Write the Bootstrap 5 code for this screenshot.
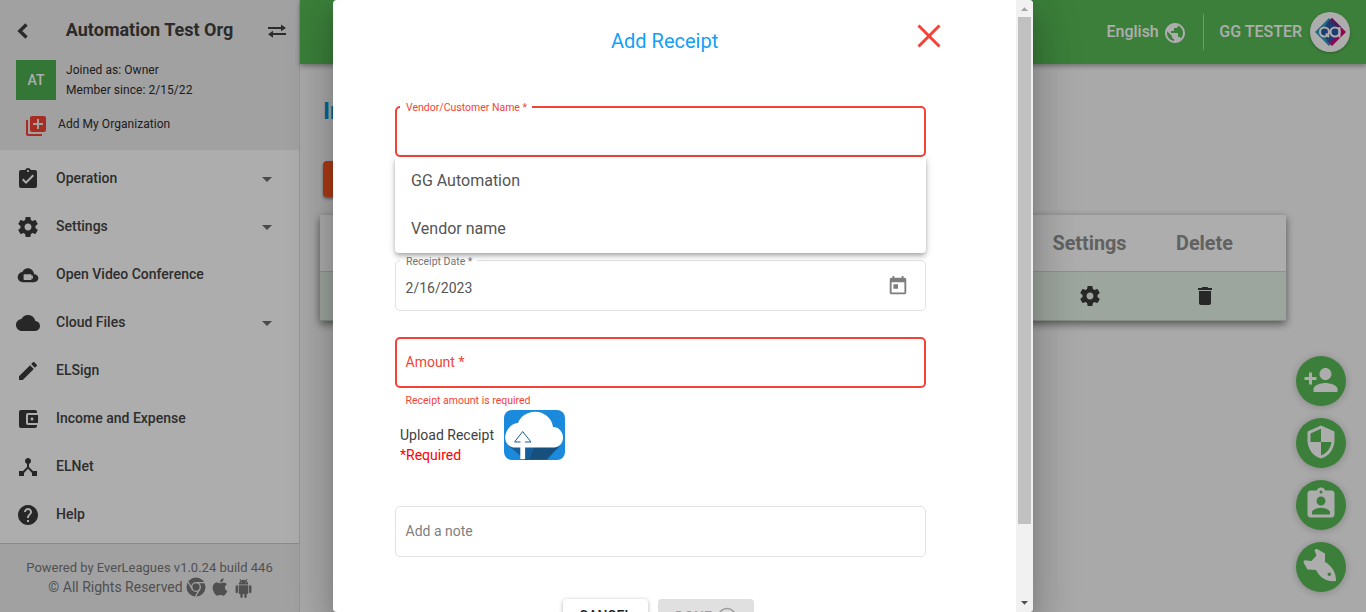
<!DOCTYPE html>
<html lang="en">
<head>
<meta charset="utf-8">
<meta name="viewport" content="width=device-width, initial-scale=1">
<title>Add Receipt</title>
<link href="https://cdn.jsdelivr.net/npm/bootstrap@5.3.0/dist/css/bootstrap.min.css" rel="stylesheet">
<style>
html,body{height:100%}
body{font-family:Roboto,"Noto Sans",sans-serif;font-size:14px;line-height:20px;color:#404040;background:#fafafa;overflow:hidden}
svg{display:block;fill:currentColor;flex:none}
.app{height:612px}
/* sidebar */
.side{width:300px;background:#fff;border-right:1px solid #dcdcdc;font-weight:500}
.side-top{height:150px;background:#eee;color:#404040}
.org-name{font-size:18px;font-weight:700}
.org-meta{font-size:12px;line-height:20px;font-weight:400;letter-spacing:.05px;color:#2c2c2c}
.avatar-sq{width:40px;height:40px;background:#4caf50;color:#fff;font-size:14px}
.menu{padding-top:4px}
.menu-row{height:48px;padding:0 27px 0 16px;gap:16px;color:#444}
.menu-row svg{color:#3a3a3a;margin-top:2px}
.caret{width:0;height:0;margin-top:2px;border:5px solid transparent;border-top-color:#6d6d6d;border-bottom:0}
.side-foot{height:69px;background:#eee;border-top:1px solid #ccc;color:#777;font-weight:400;padding-top:14px}
.side-foot .ver{font-size:13px}
/* main area */
.topbar{height:64px;background:#58bb56;color:#fff;box-shadow:0 2px 5px rgba(0,0,0,.35);font-size:16px;font-weight:500;padding-right:16px;z-index:1}
.divline{width:1px;height:36px;background:#b5dcb4}
.avatar-rd{width:40px;height:40px;background:#fff;box-shadow:0 1px 3px rgba(0,0,0,.25)}
.page-title{font-size:24px;line-height:30px;color:#0498e0;font-weight:700;margin:32px 0 35px 23px}
.btn-add{width:120px;height:36px;margin-left:23px;background:#ff5722;border-radius:4px;box-shadow:0 2px 3px rgba(0,0,0,.4)}
.grid-card{width:966px;margin:18px 0 0 20px;background:#fff;box-shadow:0 3px 8px rgba(0,0,0,.5)}
.grid-head{height:57px;padding-top:2px;border-bottom:1px solid #d5d5d5;font-size:19.8px;font-weight:700;color:#8f8f8f}
.grid-line{height:49px;background:#e8f5e9;border-bottom:1px solid #c4cfc5;color:#3a3a3a}
.c-set{width:115px}.c-del{width:115px}
.fabs{right:20px;top:356px;gap:12px}
.fab{width:50px;height:50px;background:#58bb56;color:#fff;box-shadow:0 1px 8px rgba(0,0,0,.22)}
/* dialog */
.shade{inset:0;background:rgba(0,0,0,.32);z-index:5}
.dlg{width:700px;height:612px;background:#fff;border-radius:4px;overflow:hidden;box-shadow:0 11px 15px -7px rgba(0,0,0,.2),0 24px 38px 3px rgba(0,0,0,.14),0 9px 46px 8px rgba(0,0,0,.12)}
.dlg-body{padding:0 90px 0 62px;height:612px;overflow:hidden}
.dlg-head{height:106px;padding:25px 0 0 216px}
.dlg-title{width:107px;font-size:20px;line-height:32px;color:#12a0f8}
.close-x{margin:-1px 0 0 199px;color:#f44336}
.fld{height:51px;border:1px solid #e2e2e2;border-radius:5px;padding:0 10px 0 9px;color:#555}
.fld.bad{border:2px solid #f44336;color:#f44336;padding:0 9px 2px 8.500px}
.notch{left:4px;top:-9px;padding:1px 5px 0 6px;height:18px;font-size:10.5px;line-height:18px;background:#fff;color:#757575;white-space:nowrap}
.bad .notch{left:3px;top:-10px;color:#f44336}
.opts{left:-2px;right:-2px;top:49px;height:96px;background:#fff;border-radius:0 0 4px 4px;box-shadow:0 2px 4px -1px rgba(0,0,0,.2),0 4px 5px rgba(0,0,0,.14),0 1px 10px rgba(0,0,0,.12);z-index:3;color:#555}
.opt{height:48px;line-height:48px;padding-left:16px;font-size:16px}
.err{font-size:10.5px;line-height:14px;color:#f44336;padding:6px 0 0 10.5px;height:22px}
.upl{height:55px;padding-left:5px;gap:10px}
.upl-text{width:94px;padding-top:15px}
.act{height:36px;border-radius:4px;font-weight:500;line-height:34px;font-size:14px}
.act-c{width:85px;background:#fff;color:#222;box-shadow:0 1px 4px rgba(0,0,0,.3)}
.act-d{width:96px;background:#e0e0e0;color:#9d9d9d}
.sbar{width:17px;background:#f1f1f1}
.sthumb{width:13px;height:507px;background:#c1c1c1}
.sup,.sdn{width:17px;height:17px}
.sup{color:#a3a3a3}.sdn{color:#505050}
</style>
</head>
<body>
<svg width="0" height="0" class="position-absolute">
<symbol id="gear" viewBox="0 0 24 24"><path d="M19.43 12.98c.04-.32.07-.64.07-.98s-.03-.66-.07-.98l2.11-1.65c.19-.15.24-.42.12-.64l-2-3.46c-.12-.22-.39-.3-.61-.22l-2.49 1c-.52-.4-1.08-.73-1.69-.98l-.38-2.65C14.46 2.18 14.25 2 14 2h-4c-.25 0-.46.18-.49.42l-.38 2.65c-.61.25-1.17.59-1.69.98l-2.49-1c-.23-.09-.49 0-.61.22l-2 3.46c-.13.22-.07.49.12.64l2.11 1.65c-.04.32-.07.65-.07.98s.03.66.07.98l-2.11 1.65c-.19.15-.24.42-.12.64l2 3.46c.12.22.39.3.61.22l2.49-1c.52.4 1.08.73 1.69.98l.38 2.65c.03.24.24.42.49.42h4c.25 0 .46-.18.49-.42l.38-2.65c.61-.25 1.17-.59 1.69-.98l2.49 1c.23.09.49 0 .61-.22l2-3.46c.12-.22.07-.49-.12-.64l-2.11-1.65zM12 15.5c-1.93 0-3.5-1.57-3.5-3.5s1.57-3.5 3.5-3.5 3.5 1.57 3.5 3.5-1.57 3.5-3.5 3.5z"/></symbol>
</svg>
<div class="app d-flex position-relative">
  <aside class="side d-flex flex-column flex-shrink-0">
    <div class="side-top">
      <div class="d-flex align-items-center" style="height:60px;padding-left:16px">
        <svg width="14" height="18" viewBox="0 0 14 18" style="margin-top:2px"><path d="M10.500 2.500 3.800 9l6.700 6.500" fill="none" stroke="currentColor" stroke-width="3.400"/></svg>
        <div class="org-name text-center flex-grow-1" style="padding-left:2px">Automation Test Org</div>
        <svg width="20" height="16" viewBox="0 0 20 16" style="margin:2px 12px 0 0"><path d="M1 4h13V1.500L19 5l-5 3.200V6H1zM19 10H6V7.800L1 11.200l5 3.500V12h13z"/></svg>
      </div>
      <div class="d-flex ps-3" style="gap:10px">
        <div class="avatar-sq d-flex align-items-center justify-content-center">AT</div>
        <div class="org-meta"><div>Joined as: Owner</div><div>Member since: 2/15/22</div></div>
      </div>
      <div class="d-flex align-items-center org-meta" style="padding-left:24px;gap:10px;height:50px">
        <svg width="24" height="24" viewBox="0 0 24 24" color="#f44336" style="margin-top:2px"><path d="M4 6H2v14c0 1.100.9 2 2 2h14v-2H4V6zm16-4H8c-1.100 0-2 .9-2 2v12c0 1.100.9 2 2 2h12c1.100 0 2-.9 2-2V4c0-1.100-.9-2-2-2zm-1 9h-4v4h-2v-4H9V9h4V5h2v4h4v2z"/></svg>
        <span style="margin-top:-2px">Add My Organization</span>
      </div>
    </div>
    <nav class="menu flex-grow-1">
      <div class="menu-row d-flex align-items-center"><svg width="24" height="24" viewBox="0 0 24 24"><path d="M19 3h-4.180C14.400 1.840 13.300 1 12 1c-1.300 0-2.400.84-2.820 2H5c-1.100 0-2 .9-2 2v14c0 1.100.9 2 2 2h14c1.100 0 2-.9 2-2V5c0-1.100-.9-2-2-2zm-7 0c.55 0 1 .45 1 1s-.45 1-1 1-1-.45-1-1 .45-1 1-1zm-2 14l-4-4 1.410-1.410L10 14.170l6.590-6.590L18 9l-8 8z"/></svg><span class="flex-grow-1">Operation</span><i class="caret"></i></div>
      <div class="menu-row d-flex align-items-center"><svg width="24" height="24"><use href="#gear"/></svg><span class="flex-grow-1">Settings</span><i class="caret"></i></div>
      <div class="menu-row d-flex align-items-center"><svg width="24" height="24" viewBox="0 0 24 24"><path fill-rule="evenodd" d="M18.200 11.200C17.600 7.700 15 5.200 12 5.200c-2.500 0-4.700 1.500-5.700 3.800C3.700 9.300 1.700 11.400 1.700 14c0 2.900 2.300 5.200 5.200 5.200h11.200c2.400 0 4.300-1.800 4.300-4.100 0-2.100-1.800-3.800-4.200-3.900zM8.300 11.300h6.600c.4 0 .7.300.7.700v1.300l1.300-1.100v3.900L15.600 15v1.300c0 .4-.3.700-.7.700H8.300c-.4 0-.7-.3-.7-.7V12c0-.4.3-.7.7-.7z"/></svg><span>Open Video Conference</span></div>
      <div class="menu-row d-flex align-items-center"><svg width="24" height="24" viewBox="0 0 24 24"><path d="M19.350 10.040C18.670 6.590 15.640 4 12 4 9.110 4 6.600 5.640 5.350 8.040 2.340 8.360 0 10.910 0 14c0 3.310 2.690 6 6 6h13c2.760 0 5-2.240 5-5 0-2.640-2.050-4.780-4.650-4.960z"/></svg><span class="flex-grow-1">Cloud Files</span><i class="caret"></i></div>
      <div class="menu-row d-flex align-items-center"><svg width="24" height="24" viewBox="0 0 24 24"><path d="M3 17.250V21h3.750L17.810 9.940l-3.750-3.750L3 17.250zM20.710 7.040c.39-.39.39-1.020 0-1.410l-2.340-2.340c-.39-.39-1.020-.39-1.410 0l-1.830 1.830 3.750 3.750 1.830-1.830z"/></svg><span>ELSign</span></div>
      <div class="menu-row d-flex align-items-center"><svg width="24" height="24" viewBox="0 0 24 24"><path d="M21 18v1c0 1.100-.9 2-2 2H5c-1.110 0-2-.9-2-2V5c0-1.100.89-2 2-2h14c1.100 0 2 .9 2 2v1h-9c-1.110 0-2 .9-2 2v8c0 1.100.89 2 2 2h9zm-9-2h10V8H12v8zm4-2.500c-.83 0-1.500-.67-1.500-1.500s.67-1.500 1.500-1.500 1.500.67 1.500 1.500-.67 1.500-1.500 1.500z"/></svg><span>Income and Expense</span></div>
      <div class="menu-row d-flex align-items-center"><svg width="24" height="24" viewBox="0 0 24 24"><path d="M17 16l-4-4V8.820C14.160 8.400 15 7.300 15 6c0-1.660-1.340-3-3-3S9 4.340 9 6c0 1.300.84 2.400 2 2.820V12l-4 4H3v5h5v-3.050l4-4.200 4 4.200V21h5v-5h-4z"/></svg><span>ELNet</span></div>
      <div class="menu-row d-flex align-items-center"><svg width="24" height="24" viewBox="0 0 24 24"><path d="M12 2C6.480 2 2 6.480 2 12s4.480 10 10 10 10-4.480 10-10S17.520 2 12 2zm1 17h-2v-2h2v2zm2.070-7.750l-.9.920C13.450 12.900 13 13.500 13 15h-2v-.5c0-1.100.45-2.100 1.170-2.830l1.240-1.260c.37-.36.59-.86.59-1.410 0-1.100-.9-2-2-2s-2 .9-2 2H8c0-2.210 1.790-4 4-4s4 1.790 4 4c0 .88-.36 1.680-.93 2.250z"/></svg><span>Help</span></div>
    </nav>
    <footer class="side-foot text-center">
      <div class="ver">Powered by EverLeagues v1.0.24 build 446</div>
      <div class="d-flex justify-content-center align-items-start" style="padding-left:2px">
        <span style="margin-top:-1px">© All Rights Reserved</span>
        <svg width="20" height="20" viewBox="0 0 20 20" style="margin-left:3px;margin-top:-1px"><circle cx="10" cy="10" r="9.500"/><g fill="none" stroke="#eee" stroke-width="1.300"><circle cx="10" cy="10" r="4.300"/><path d="M10 5.700h9M6.300 12.100 1.800 4.500M13.700 12.100 9.500 19.500"/></g></svg>
        <svg width="16" height="20" viewBox="0 0 384 512" style="margin-left:6px;margin-top:-1px"><path d="M318.700 268.700c-.2-36.700 16.400-64.400 50-84.800-18.800-26.900-47.200-41.700-84.700-44.600-35.500-2.800-74.300 20.700-88.500 20.700-15 0-49.400-19.700-76.400-19.700C63.300 141.200 4 184.800 4 273.500q0 39.300 14.400 81.200c12.800 36.700 59 126.700 107.200 125.200 25.200-.6 43-17.900 75.800-17.900 31.800 0 48.300 17.900 76.400 17.900 48.600-.7 90.400-82.500 102.600-119.300-65.200-30.700-61.700-90-61.700-91.900zm-56.600-164.200c27.300-32.400 24.800-61.900 24-72.500-24.100 1.400-52 16.400-67.900 34.900-17.500 19.800-27.800 44.300-25.600 71.900 26.100 2 49.900-11.400 69.500-34.300z"/></svg>
        <svg width="19" height="19" viewBox="0 0 24 24" style="margin-left:6px;margin-top:1px"><path d="M6 18c0 .55.45 1 1 1h1v3.500c0 .83.67 1.500 1.500 1.500s1.500-.67 1.500-1.500V19h2v3.500c0 .83.67 1.500 1.500 1.500s1.500-.67 1.500-1.500V19h1c.55 0 1-.45 1-1V8H6v10zM3.500 8C2.670 8 2 8.670 2 9.500v7c0 .83.67 1.500 1.500 1.500S5 17.330 5 16.500v-7C5 8.670 4.330 8 3.500 8zm17 0c-.83 0-1.500.67-1.500 1.500v7c0 .83.67 1.500 1.500 1.500s1.500-.67 1.500-1.500v-7c0-.83-.67-1.500-1.500-1.500zm-4.970-5.840l1.300-1.300c.2-.2.2-.51 0-.71-.2-.2-.51-.2-.71 0l-1.480 1.480C13.850 1.230 12.950 1 12 1c-.96 0-1.860.23-2.660.63L7.850.15c-.2-.2-.51-.2-.71 0-.2.2-.2.510 0 .71l1.310 1.310C6.970 3.260 6 5.010 6 7h12c0-1.990-.97-3.750-2.470-4.840zM10 5H9V4h1v1zm5 0h-1V4h1v1z"/></svg>
      </div>
    </footer>
  </aside>

  <main class="flex-grow-1">
    <header class="topbar d-flex align-items-center justify-content-end position-relative">
      <span>English</span>
      <svg width="24" height="24" viewBox="0 0 24 24" style="margin:2px 16px 0 4.500px"><path d="M12 2C6.480 2 2 6.480 2 12s4.480 10 10 10 10-4.480 10-10S17.520 2 12 2zm-1 17.930c-3.950-.49-7-3.850-7-7.930 0-.62.08-1.210.21-1.790L9 15v1c0 1.100.9 2 2 2v1.930zm6.900-2.540c-.26-.81-1-1.390-1.900-1.390h-1v-3c0-.55-.45-1-1-1H8v-2h2c.55 0 1-.45 1-1V7h2c1.100 0 2-.9 2-2v-.41c2.930 1.190 5 4.060 5 7.410 0 2.080-.8 3.970-2.100 5.390z"/></svg>
      <span class="divline"></span>
      <span style="margin:0 8px 0 15px">GG TESTER</span>
      <span class="avatar-rd rounded-circle d-flex align-items-center justify-content-center">
        <svg width="32" height="28" viewBox="0 0 32 28"><path d="M15 0 1 14l14 14 4-4V4z" fill="#2e9cc0"/><path d="M18 0 32 14 18 28l-5-5 8-9-8-9z" fill="#d6087c"/><path d="M18 0l9 9-6 5-8-9z" fill="#66308a"/><path d="M16 3 27 14 16 25 5 14z" fill="#2b59a8"/><g fill="none" stroke="#fff" stroke-width="2.100"><circle cx="10.500" cy="14" r="4.500"/><circle cx="21" cy="14" r="4.500"/><path d="M12 15.500l3 3.500M25.500 9v10.500"/></g></svg>
      </span>
    </header>
    <h1 class="page-title">Income</h1>
    <div class="btn-add"></div>
    <section class="grid-card">
      <div class="grid-head d-flex align-items-center justify-content-end text-center"><span class="c-set">Settings</span><span class="c-del">Delete</span><span style="width:24px"></span></div>
      <div class="grid-line d-flex align-items-center justify-content-end"><span class="c-set d-flex justify-content-center"><svg width="24" height="24"><use href="#gear"/></svg></span><span class="c-del d-flex justify-content-center"><svg width="24" height="24" viewBox="0 0 24 24"><path d="M6 19c0 1.100.9 2 2 2h8c1.100 0 2-.9 2-2V7H6v12zM19 4h-3.500l-1-1h-5l-1 1H5v2h14V4z"/></svg></span><span style="width:24px"></span></div>
    </section>
  </main>

  <div class="fabs position-absolute d-flex flex-column">
    <span class="fab rounded-circle d-flex align-items-center justify-content-center"><svg width="36" height="36" viewBox="0 0 24 24" style="margin-top:-3px"><path d="M15 12c2.210 0 4-1.790 4-4s-1.790-4-4-4-4 1.790-4 4 1.790 4 4 4zm-9-2V7H4v3H1v2h3v3h2v-3h3v-2H6zm9 4c-2.670 0-8 1.340-8 4v2h16v-2c0-2.660-5.330-4-8-4z"/></svg></span>
    <span class="fab rounded-circle d-flex align-items-center justify-content-center"><svg width="36" height="36" viewBox="0 0 24 24" style="margin-top:-3px"><path d="M12 1L3 5v6c0 5.550 3.840 10.740 9 12 5.160-1.260 9-6.450 9-12V5l-9-4zm0 10.990h7c-.53 4.120-3.280 7.790-7 8.940V12H5V6.300l7-3.110v8.800z"/></svg></span>
    <span class="fab rounded-circle d-flex align-items-center justify-content-center"><svg width="36" height="36" viewBox="0 0 24 24" style="margin-top:-3px"><path d="M19 3h-4.180C14.400 1.840 13.300 1 12 1c-1.300 0-2.400.84-2.820 2H5c-1.100 0-2 .9-2 2v14c0 1.100.9 2 2 2h14c1.100 0 2-.9 2-2V5c0-1.100-.9-2-2-2zm-7 0c.55 0 1 .45 1 1s-.45 1-1 1-1-.45-1-1 .45-1 1-1zm0 4c1.660 0 3 1.340 3 3s-1.340 3-3 3-3-1.340-3-3 1.340-3 3-3zm6 12H6v-1.400c0-2 4-3.100 6-3.100s6 1.100 6 3.100V19z"/></svg></span>
    <span class="fab rounded-circle d-flex align-items-center justify-content-center"><svg width="50" height="50" viewBox="0 0 50 50"><path fill-rule="evenodd" d="M18.500 8.500q.5-2 2.500-1.500l8 4.500v8.500c7 4 11 10 11 19-9 1-16-3-20-11l-8.500-.5-4-7c0-2 1-2.500 3-2l5 .5 5-5.500zM33.300 30.500a1.800 1.800 0 1 0 0 3.600 1.800 1.800 0 0 0 0-3.600z"/></svg></span>
  </div>

  <div class="shade position-absolute d-flex justify-content-center">
    <section class="dlg d-flex">
      <div class="dlg-body flex-grow-1">
        <div class="dlg-head d-flex align-items-start">
          <div class="dlg-title text-nowrap">Add Receipt</div>
          <svg class="close-x" width="24" height="24" viewBox="0 0 24 24"><path d="M1.500 1.500l21 21M22.500 1.500l-21 21" fill="none" stroke="currentColor" stroke-width="3"/></svg>
        </div>
        <div class="fld bad position-relative"><span class="notch position-absolute">Vendor/Customer Name *</span>
          <div class="opts position-absolute"><div class="opt">GG Automation</div><div class="opt">Vendor name</div></div>
        </div>
        <div class="fld position-relative d-flex align-items-center justify-content-between" style="margin-top:103px"><span class="notch position-absolute">Receipt Date *</span>
          <span style="letter-spacing:.02px;padding:4px 0 0 .5px">2/16/2023</span>
          <svg width="22" height="22" viewBox="0 0 24 24" color="#7d7d7d" style="margin:1px 6.500px 0 0"><path d="M19 3h-1V1h-2v2H8V1H6v2H5c-1.110 0-1.990.9-1.990 2L3 19c0 1.100.89 2 2 2h14c1.100 0 2-.9 2-2V5c0-1.100-.9-2-2-2zm0 16H5V8h14v11zM7 10h5v5H7z"/></svg>
        </div>
        <div class="fld bad d-flex align-items-center" style="margin-top:26px">Amount *</div>
        <div class="err">Receipt amount is required</div>
        <div class="upl d-flex align-items-start">
          <div class="upl-text text-nowrap">Upload Receipt<br><span style="color:#f00">*Required</span></div>
          <svg width="61" height="50" viewBox="0 0 61 50"><rect width="61" height="50" rx="8" fill="#1b89dc"/><path d="M3 34 21 50h22l14-16z" fill="#175f98"/><path d="M30 37h25L42 49H26z" fill="#174f7d"/><path d="M10 37.500C4 37 1 32 1.200 27 1.500 20 7 13.500 14 13 16 7 23 1.800 31 1.800c9 0 17 6.200 18 15.200 6 0 10 5 10 10.500 0 6-4 9.800-9 10z" fill="#fff"/><path d="M18.700 21.500 10.500 32h5.800v17h4.800V32H27z" fill="#fff"/><path d="M16.500 32h-6l8.200-10.500L27 32h-6" fill="none" stroke="#175f98" stroke-width="1"/></svg>
        </div>
        <div class="fld d-flex align-items-center" style="margin-top:41px;padding:0 0 2px 9.500px;color:#808080">Add a note</div>
        <div class="d-flex" style="margin:42px 0 0 168px;gap:10px">
          <div class="act act-c text-center">CANCEL</div>
          <div class="act act-d d-flex align-items-center justify-content-center" style="gap:5px">DONE <svg width="20" height="20" viewBox="0 0 20 20"><circle cx="10" cy="10" r="8.500" fill="none" stroke="currentColor" stroke-width="1.700"/><path d="M6 10l3 3 5-6" fill="none" stroke="currentColor" stroke-width="1.700"/></svg></div>
        </div>
      </div>
      <div class="sbar d-flex flex-column align-items-center flex-shrink-0">
        <svg class="sup" viewBox="0 0 17 17"><path d="M5 11 8.500 7.200 12 11z"/></svg>
        <div class="sthumb"></div>
        <svg class="sdn mt-auto" viewBox="0 0 17 17"><path d="M5 6h7L8.500 9.800z"/></svg>
      </div>
    </section>
  </div>
</div>
<script src="https://cdn.jsdelivr.net/npm/bootstrap@5.3.0/dist/js/bootstrap.bundle.min.js"></script>
</body>
</html>
